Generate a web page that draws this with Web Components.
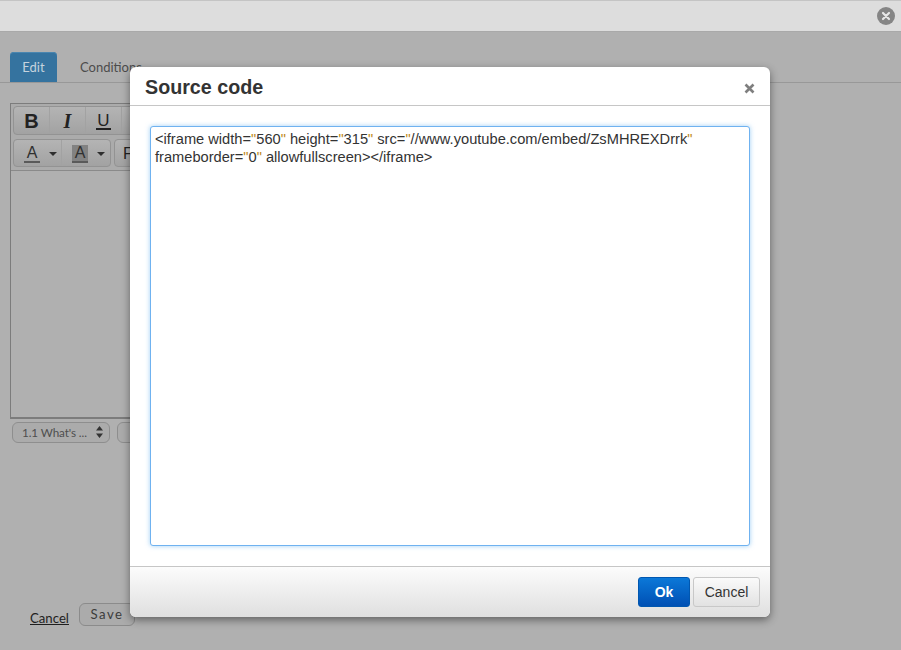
<!DOCTYPE html>
<html>
<head>
<meta charset="utf-8">
<title>Source code</title>
<style>
    html, body {margin: 0; height: 650px; overflow: hidden; background: #b0b0b0;}
    body {font-family: "Liberation Sans", Arial, sans-serif;}
</style>
</head>
<body>
<x-topbar></x-topbar>
<x-tabs></x-tabs>
<x-editor></x-editor>
<x-form-actions></x-form-actions>
<x-modal title="Source code">
    <x-code-area></x-code-area>
    <x-dialog-button slot="footer" kind="primary">Ok</x-dialog-button>
    <x-dialog-button slot="footer">Cancel</x-dialog-button>
</x-modal>

<script>
"use strict";

class Topbar extends HTMLElement {
    constructor() {
        super();
        this.attachShadow({mode: "open"}).innerHTML = `
            <style>
                :host {display: flex; justify-content: flex-end; align-items: center; box-sizing: border-box;
                    height: 32px; padding: 0 6px 1px 0; background: #dddddd;
                    border-top: 1px solid #c4c4c4; border-bottom: 1px solid #a9a9a9;}
                .close {width: 18px; height: 18px; border-radius: 50%; background: #858585;
                    display: flex; align-items: center; justify-content: center;}
            </style>
            <div class="close">
                <svg width="10" height="10" viewBox="0 0 10 10"><path d="M2 2l6 6M8 2l-6 6" stroke="#e8e8e8" stroke-width="2.2" stroke-linecap="round"/></svg>
            </div>
        `;
    }
}

class Tabs extends HTMLElement {
    constructor() {
        super();
        this.attachShadow({mode: "open"}).innerHTML = `
            <style>
                :host {display: flex; box-sizing: border-box; height: 51px; padding: 20px 0 0 10px;
                    border-bottom: 1px solid #989898; font: 13px Lato, sans-serif; color: #4c4c4c;}
                div {height: 30px; line-height: 30px;}
                .active {width: 47px; text-align: center; background: #35739f; color: #c6d3de;
                    border-radius: 4px 4px 0 0; box-shadow: inset 0 1px 0 #4a86b0;}
                .tab {margin-left: 23px;}
            </style>
            <div class="active">Edit</div>
            <div class="tab">Conditions</div>
        `;
    }
}

class Editor extends HTMLElement {
    constructor() {
        super();
        const arrow = `<svg width="8" height="4" viewBox="0 0 8 4"><path d="M0 0h8L4 4z" fill="#2e2e2e"/></svg>`;
        this.attachShadow({mode: "open"}).innerHTML = `
            <style>
                :host {box-sizing: border-box; width: 330px; height: 316px; margin: 20px 0 0 10px;
                    border: 1px solid #7c7c7c; border-bottom-width: 2px; display: flex; flex-direction: column;}
                .bar {padding: 2px 2px 3px; border-bottom: 1px solid #8a8a8a; background: #ababab;
                    display: flex; flex-direction: column; gap: 4px;}
                .row {display: flex; gap: 3px;}
                .group {display: flex; height: 29px; border: 1px solid #939393; border-radius: 4px;
                    box-sizing: border-box; background: linear-gradient(#b4b4b4, #a2a2a2);}
                .row.second .group {height: 28px;}
                .b {box-sizing: border-box; width: 36px; padding-top: 1px; display: flex; align-items: center; justify-content: center;
                    font: 20px "Liberation Sans", sans-serif; color: #222; border-right: 1px solid #a2a2a2;}
                .c {width: 48px; padding-top: 2px; justify-content: flex-start; gap: 9px; padding-left: 10px; font-size: 16px; color: #303030;}
                .c span {display: block; width: 16px; height: 16px; line-height: 16px; text-align: center;
                    border-bottom: 2px solid #5a5a5a;}
                .c .fill {background: #828282;}
                .u {font-size: 17px; line-height: 15px; display: block; border-bottom: 2px solid #222; padding: 0 1px;}
            </style>
            <div class="bar">
                <div class="row"><div class="group">
                    <div class="b" style="font-weight:700">B</div>
                    <div class="b" style="font: italic 700 20px 'Liberation Serif', serif">I</div>
                    <div class="b"><span class="u">U</span></div>
                    <div class="b"></div><div class="b"></div><div class="b"></div>
                </div></div>
                <div class="row second">
                    <div class="group">
                        <div class="b c"><span>A</span>${arrow}</div>
                        <div class="b c" style="border:0"><span class="fill">A</span>${arrow}</div>
                    </div>
                    <div class="group"><div class="b" style="justify-content:flex-start;padding-left:8px;width:90px;font-size:16px">F</div></div>
                </div>
            </div>
        `;
    }
}

class FormActions extends HTMLElement {
    constructor() {
        super();
        this.attachShadow({mode: "open"}).innerHTML = `
            <style>
                :host {display: block; font: 13.2px Lato, sans-serif; color: #3c3c3c;}
                .selects {display: flex; gap: 7px; padding: 3px 0 0 12px;}
                .select {box-sizing: border-box; height: 21px; border: 1px solid #8e8e8e; border-radius: 6px;
                    display: flex; align-items: center; justify-content: space-between; padding: 0 6px 1px 9px; width: 98px;
                    font-size: 11.7px; letter-spacing: -.1px; color: #4e4e4e; background: #ababab;}
                .select + .select {width: 60px;}
                .actions {display: flex; align-items: center; gap: 10px; padding: 160px 0 0 30px;}
                a {color: #1f1f1f; text-decoration: underline; margin-top: 6px;}
                .save {box-sizing: border-box; width: 56px; height: 23px; line-height: 21px; text-align: center;
                    border: 1px solid #8b8b8b; border-radius: 6px; letter-spacing: 1.5px; background: #ababab;}
            </style>
            <div class="selects">
                <div class="select">1.1 What's ...
                    <svg width="7" height="12" viewBox="0 0 7 12"><path d="M3.5 0L7 4.5H0zM3.5 12L0 7.5h7z" fill="#333"/></svg>
                </div>
                <div class="select"></div>
            </div>
            <div class="actions"><a>Cancel</a><div class="save">Save</div></div>
        `;
    }
}

class CodeArea extends HTMLElement {
    constructor() {
        super();
        const q = `<i>"</i>`;
        this.attachShadow({mode: "open"}).innerHTML = `
            <style>
                :host {display: block; box-sizing: border-box; height: 420px; padding: 3px 4px;
                    border: 1px solid #6fb2f0; border-radius: 3px; background: #fff;
                    box-shadow: 0 0 5px rgba(82, 168, 236, .55);
                    font: 14.65px/18px "Liberation Sans", sans-serif; color: #333;}
                i {font-style: normal; color: #c08a20;}
            </style>
            &lt;iframe width=${q}560${q} height=${q}315${q} src=${q}//www.youtube.com/embed/ZsMHREXDrrk${q}<br>
            frameborder=${q}0${q} allowfullscreen&gt;&lt;/iframe&gt;
        `;
    }
}

class DialogButton extends HTMLElement {
    constructor() {
        super();
        this.attachShadow({mode: "open"}).innerHTML = `
            <style>
                :host {display: block; box-sizing: border-box; width: 67px; height: 30px; line-height: 28px; text-align: center;
                    border: 1px solid #c8c8c8; border-radius: 3px; font-size: 14px; color: #333;
                    background: linear-gradient(#fafafa, #e2e2e2);}
                :host([kind="primary"]) {width: 52px; border-color: #0057b0; color: #fff; font-weight: 700;
                    background: linear-gradient(#0b78d8, #0050b4);}
            </style>
            <slot></slot>
        `;
    }
}

class Modal extends HTMLElement {
    constructor() {
        super();
        this.attachShadow({mode: "open"}).innerHTML = `
            <style>
                :host {position: absolute; left: 130px; top: 67px; width: 640px; height: 550px; box-sizing: border-box;
                    display: flex; flex-direction: column; background: #fff; border-radius: 6px;
                    box-shadow: 0 3px 9px rgba(0, 0, 0, .45);}
                header {height: 39px; box-sizing: border-box; flex: none; display: flex; justify-content: space-between;
                    align-items: center; padding: 2px 15px 0; border-bottom: 1px solid #c6c6c6;}
                h3 {margin: 0; font: 700 19.7px "Liberation Sans", sans-serif; color: #333;}
                svg {margin-top: 3px;}
                .body {flex: 1; padding: 20px;}
                footer {height: 51px; flex: none; box-sizing: border-box; display: flex; justify-content: flex-end; gap: 3px;
                    padding: 10px 10px 0; border-top: 1px solid #c6c6c6; border-radius: 0 0 6px 6px;
                    background: linear-gradient(#fcfcfc, #dfdfdf);}
            </style>
            <header>
                <h3></h3>
                <svg width="11" height="11" viewBox="0 0 11 11"><path d="M1.5 1.5l8 8M9.5 1.5l-8 8" stroke="#7f7f7f" stroke-width="2.6"/></svg>
            </header>
            <div class="body"><slot></slot></div>
            <footer><slot name="footer"></slot></footer>
        `;
        this.shadowRoot.querySelector("h3").textContent = this.getAttribute("title");
    }
}

customElements.define("x-topbar", Topbar);
customElements.define("x-tabs", Tabs);
customElements.define("x-editor", Editor);
customElements.define("x-form-actions", FormActions);
customElements.define("x-code-area", CodeArea);
customElements.define("x-dialog-button", DialogButton);
customElements.define("x-modal", Modal);
</script>
</body>
</html>
